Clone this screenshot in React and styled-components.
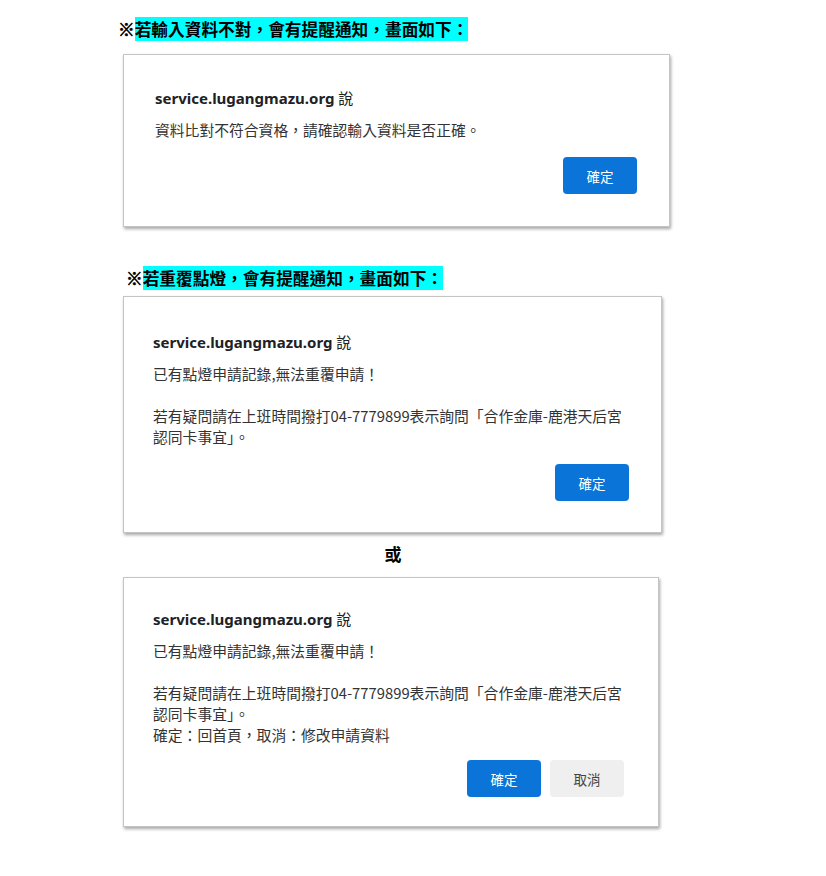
import React from 'react'
import styled, { createGlobalStyle } from 'styled-components'

const GlobalStyle = createGlobalStyle`
  body {
    margin: 0;
    background: #ffffff;
    font-family: "Noto Sans", "Noto Sans CJK TC", sans-serif;
  }
`

const Page = styled.div`
  width: 826px;
  min-height: 876px;
  padding-top: 18px;
  box-sizing: border-box;
  display: flex;
  flex-direction: column;
  align-items: flex-start;
`

const Heading = styled.div`
  margin-left: ${p => p.$left}px;
  margin-top: ${p => p.$top || 0}px;
  font-family: "Noto Sans CJK TC", sans-serif;
  font-weight: 700;
  font-size: 16.7px;
  line-height: 22px;
  color: #000;
  white-space: nowrap;
`

const RefMark = styled.span`
  font-family: "Noto Sans CJK TC", sans-serif;
  font-weight: 900;
  -webkit-text-stroke: 0.6px #000;
`

const Mark = styled.span`
  background: #00ffff;
`

const Or = styled.div`
  margin-top: 10px;
  width: 786px;
  text-align: center;
  font-family: "Noto Sans CJK TC", sans-serif;
  font-weight: 700;
  font-size: 17px;
  line-height: 22px;
  color: #000;
`

const Dialog = styled.div`
  margin-left: 123px;
  margin-top: ${p => p.$top}px;
  width: ${p => p.$width}px;
  box-sizing: border-box;
  padding: ${p => p.$padTop}px ${p => p.$padRight}px ${p => p.$padBottom}px ${p => p.$padLeft}px;
  background: #fff;
  border: 1px solid #c4c4c4;
  box-shadow: 1px 2px 3px rgba(0, 0, 0, 0.35);
  display: flex;
  flex-direction: column;
`

const Title = styled.div`
  font-family: "Noto Sans", "Noto Sans CJK TC", sans-serif;
  font-weight: 700;
  font-size: 15px;
  line-height: 20px;
  color: #202124;
  margin-bottom: 11px;

  span {
    font-weight: 400;
    font-family: "Noto Sans CJK TC", sans-serif;
  }
`

const Body = styled.div`
  font-family: "Noto Sans CJK TC", sans-serif;
  font-size: 14.8px;
  line-height: 21px;
  color: #333;
  white-space: pre;
`

const Actions = styled.div`
  display: flex;
  justify-content: flex-end;
  gap: 9px;
  margin-top: ${p => p.$gap}px;
`

const Button = styled.button`
  width: 74px;
  height: 37px;
  border-radius: 4px;
  border: none;
  font-family: "Noto Sans CJK TC", sans-serif;
  font-size: 13.5px;
  background: ${p => (p.$primary ? '#0b74d8' : '#efefef')};
  color: ${p => (p.$primary ? '#fff' : '#444')};
  cursor: pointer;
`

const Host = () => (
  <Title>
    service.lugangmazu.org <span>說</span>
  </Title>
)

export default function App() {
  return (
    <>
      <GlobalStyle />
      <Page>
        <Heading $left={118}>
          <RefMark>※</RefMark>
          <Mark>若輸入資料不對，會有提醒通知，畫面如下：</Mark>
        </Heading>

        <Dialog $top={14} $width={547} $padTop={33} $padRight={32} $padBottom={32} $padLeft={31}>
          <Host />
          <Body>資料比對不符合資格，請確認輸入資料是否正確。</Body>
          <Actions $gap={17}>
            <Button $primary>確定</Button>
          </Actions>
        </Dialog>

        <Heading $left={126} $top={40}>
          <RefMark>※</RefMark>
          <Mark>若重覆點燈，會有提醒通知，畫面如下：</Mark>
        </Heading>

        <Dialog $top={7} $width={539} $padTop={35} $padRight={32} $padBottom={31} $padLeft={29}>
          <Host />
          <Body>
            {'已有點燈申請記錄,無法重覆申請！\n\n若有疑問請在上班時間撥打04-7779899表示詢問「合作金庫-鹿港天后宮\n認同卡事宜」。'}
          </Body>
          <Actions $gap={17}>
            <Button $primary>確定</Button>
          </Actions>
        </Dialog>

        <Or>或</Or>

        <Dialog $top={12} $width={536} $padTop={31} $padRight={34} $padBottom={29} $padLeft={29}>
          <Host />
          <Body>
            {'已有點燈申請記錄,無法重覆申請！\n\n若有疑問請在上班時間撥打04-7779899表示詢問「合作金庫-鹿港天后宮\n認同卡事宜」。\n確定：回首頁，取消：修改申請資料'}
          </Body>
          <Actions $gap={15}>
            <Button $primary>確定</Button>
            <Button>取消</Button>
          </Actions>
        </Dialog>
      </Page>
    </>
  )
}
